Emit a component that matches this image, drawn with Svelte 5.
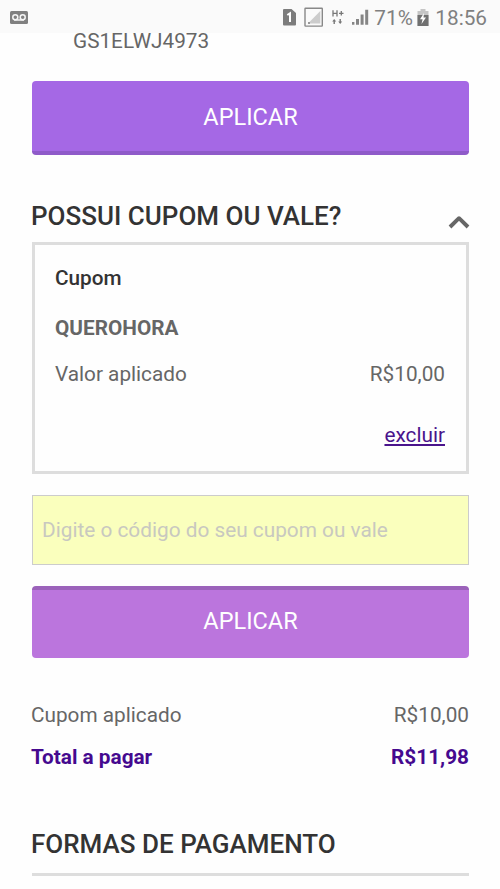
<script>
  const totals = [
    { label: 'Cupom aplicado', value: 'R$10,00', strong: false },
    { label: 'Total a pagar', value: 'R$11,98', strong: true }
  ];
</script>

<div class="screen">
  <header class="status">
    <svg class="voicemail" width="18" height="14" viewBox="0 0 18 14">
      <rect width="18" height="13" rx="1.5" fill="#808080" />
      <g fill="none" stroke="#f5f5f5" stroke-width="1.5">
        <circle cx="5.3" cy="6.2" r="2.5" />
        <circle cx="12.7" cy="6.2" r="2.5" />
        <path d="M4 9h10" />
      </g>
    </svg>
    <div class="indicators">
      <svg width="88" height="22" viewBox="0 0 88 22">
        <path d="M2 3H9.5L14 7V18.5Q14 19.5 13 19.5H2Q1 19.5 1 18.5V4Q1 3 2 3Z" fill="#7c7c7c" />
        <path d="M5.3 9L8 7.3V16" fill="none" stroke="#fff" stroke-width="2" />
        <rect x="23" y="2.3" width="17.3" height="17.8" rx=".5" fill="none" stroke="#888" stroke-width="1.4" />
        <path d="M38.3 5V17.5H26Z" fill="#ccc" />
        <path d="M26 16V18H28V16Z" fill="#999" />
        <g fill="none" stroke="#777" stroke-width="1.3">
          <path d="M51 4.2V10.5M55 4.2V10.5M51 7.3H55M57 7.3H61.5M59.3 5V9.6" />
        </g>
        <path d="M50.2 15.4L52.2 13L54.2 15.4H52.9V18H51.5V15.4ZM56.2 15.6H57.5V13H58.9V15.6H60.2L58.2 18Z" fill="#777" />
        <path d="M70 16H72.4V18.7H70ZM74 13H77V18.7H74ZM78.6 8.5H81.6V18.7H78.6ZM83.2 3.7H86.2V18.7H83.2Z" fill="#858585" />
      </svg>
      <span class="percent">71%</span>
      <svg class="battery" width="12" height="18" viewBox="0 0 12 18">
        <path d="M3.5 0H8.5V2H11.5V17H.5V2H3.5Z" fill="#c5c5c5" />
        <path d="M.5 6H11.5V17H.5Z" fill="#707070" />
        <path d="M7 4L3 10.3H5.6L4.5 15L9 8.4H6.5Z" fill="#fff" />
      </svg>
      <span class="clock">18:56</span>
    </div>
  </header>

  <main>
    <p class="code">GS1ELWJ4973</p>
    <button class="apply">APLICAR</button>

    <div class="heading">
      <h2>POSSUI CUPOM OU VALE?</h2>
      <svg width="22" height="14" viewBox="0 0 22 14">
        <path d="M2 12L11 3.2L20 12" fill="none" stroke="#666" stroke-width="3.9" stroke-linejoin="round" />
      </svg>
    </div>

    <section class="coupon">
      <h3>Cupom</h3>
      <strong class="name">QUEROHORA</strong>
      <div class="row applied"><span class="label">Valor aplicado</span><span>R$10,00</span></div>
      <a href="#excluir">excluir</a>
    </section>

    <input type="text" placeholder="Digite o código do seu cupom ou vale" />
    <button class="apply pressed">APLICAR</button>

    <div class="totals">
      {#each totals as item}
        <div class="row" class:strong={item.strong}>
          <span class="label">{item.label}</span><span>{item.value}</span>
        </div>
      {/each}
    </div>

    <h2 class="payment">FORMAS DE PAGAMENTO</h2>
  </main>
</div>

<style>
  .screen {
    width: 500px;
    height: 889px;
    overflow: hidden;
    box-sizing: border-box;
    background: #fefefe;
    font-family: Roboto, sans-serif;
    font-size: 20.75px;
    line-height: 24px;
    color: #666;
  }
  .status {
    height: 33px;
    box-sizing: border-box;
    padding: 0 13px 0 10px;
    display: flex;
    align-items: center;
    justify-content: space-between;
    background: #fafafa;
    color: #808080;
  }
  svg { display: block; flex: none; }
  .voicemail { margin-top: 2px; }
  .indicators { display: flex; align-items: center; height: 33px; padding-top: 2px; }
  .indicators svg { margin-top: -1px; }
  .percent { margin-left: 4px; width: 39px; white-space: nowrap; }
  .indicators .battery { margin: 1px 0 0 4px; }
  .clock { margin-left: 6px; }
  main { padding: 0 31px 0 32px; }
  p, h2, h3 { margin: 0; }
  .code { padding: 0 0 0 41px; height: 48px; line-height: 17px; }
  .apply {
    display: block;
    width: 437px;
    height: 74px;
    padding: 3px 0 0;
    border: 0;
    border-bottom: 4px solid #8f5bc9;
    border-radius: 4px;
    background: #a568e5;
    color: #fff;
    font: 23.5px/67px Roboto, sans-serif;
  }
  .heading { display: flex; justify-content: space-between; height: 87px; box-sizing: border-box; padding-top: 46px; }
  h2 { margin-left: -1px; font-size: 26px; font-weight: 500; line-height: 30px; color: #333; white-space: nowrap; }
  .heading svg { margin: 14px -1px 0 0; }
  .coupon {
    height: 232px;
    box-sizing: border-box;
    border: 3px solid #ddd;
    padding: 21px 21px 0 20px;
    display: flex;
    flex-direction: column;
  }
  h3 { font-size: 20.75px; font-weight: 500; line-height: 24px; color: #333; }
  .name { margin-top: 26px; font-weight: 700; }
  .row { display: flex; justify-content: space-between; }
  .applied { margin-top: 22px; }
  a { align-self: flex-end; margin-top: 37px; color: #4a148c; text-underline-offset: 2px; text-decoration-thickness: 1.5px; }
  input {
    display: block;
    width: 437px;
    height: 70px;
    box-sizing: border-box;
    margin: 21px 0;
    padding: 0 9px;
    border: 1.5px solid #ccc;
    border-radius: 0;
    background: #faffbd;
    font: 20.8px Roboto, sans-serif;
  }
  input::placeholder { color: #c8c8c0; opacity: 1; }
  .pressed {
    height: 72px;
    border-bottom: 0;
    border-top: 4px solid #9b62ba;
    background: #bb75dd;
    padding: 0 0 6px;
    line-height: 62px;
  }
  .totals { margin: 45px 0 0 -1px; display: flex; flex-direction: column; gap: 18px; }
  .strong { color: #45098f; font-weight: 700; }
  .payment { margin: 59px 0 0; height: 48px; border-bottom: 3px solid #ddd; line-height: 32px; box-sizing: border-box; text-indent: -1px; }
</style>
